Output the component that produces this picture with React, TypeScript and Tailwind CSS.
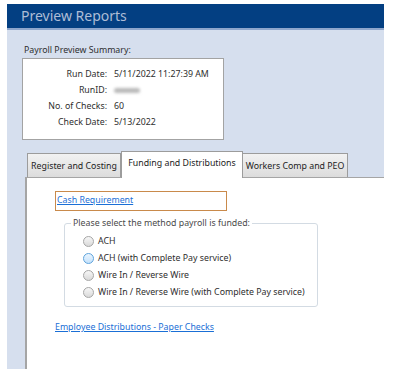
function Radio({ active }: { active?: boolean }) {
  return (
    <span
      className={
        active
          ? "inline-block h-[11px] w-[11px] shrink-0 rounded-full border border-[#5ea3dc] bg-gradient-to-b from-[#eaf5ff] to-[#c5e2fb]"
          : "inline-block h-[11px] w-[11px] shrink-0 rounded-full border border-[#a6a6a6] bg-gradient-to-b from-[#f7f7f7] to-[#d9d9d9]"
      }
    />
  );
}

const summary = [
  ["Run Date:", "5/11/2022 11:27:39 AM"],
  ["RunID:", ""],
  ["No. of Checks:", "60"],
  ["Check Date:", "5/13/2022"],
];

const methods = [
  "ACH",
  "ACH (with Complete Pay service)",
  "Wire In / Reverse Wire",
  "Wire In / Reverse Wire (with Complete Pay service)",
];

export default function App() {
  return (
    <div className="flex h-[369px] w-[393px] flex-col overflow-hidden whitespace-nowrap bg-white pl-[7px] pr-[9px] pt-[4px] font-['Noto_Sans',sans-serif] text-[8.8px] text-[#2e2e2e]">
      <div className="h-[26px] shrink-0 border-b-2 border-[#8ea6cc] bg-[#033f82] pl-[14px] text-[14px] leading-[24px] text-[#aebdd6]">
        Preview Reports
      </div>

      <div className="flex flex-1 flex-col bg-[#d6dfee] pl-[15px]">
        <div className="mt-[12px] pl-[2px] leading-[16px]">Payroll Preview Summary:</div>
        <div className="h-[82px] w-[202px] border border-[#a3a3a3] bg-white pt-[7px]">
          {summary.map(([label, value]) => (
            <div key={label} className="flex h-[16px] items-center leading-[16px]">
              <span className="w-[84px] text-right">{label}</span>
              <span className="ml-[7px]">
                {value || <span className="inline-block h-[5px] w-[26px] rounded-sm bg-[#b9b9b9] blur-[1.5px]" />}
              </span>
            </div>
          ))}
        </div>

        <div className="mt-[11px] flex h-[26px] items-end pl-[5px]">
          <div className="h-[24px] w-[94px] border border-b-0 border-[#9c9c9c] bg-gradient-to-b from-[#f2f2f2] to-[#dcdcdc] text-center leading-[24px] text-[#1c1c1c]">
            Register and Costing
          </div>
          <div className="relative z-10 -mb-px h-[27px] w-[122px] border border-b-0 border-[#9c9c9c] bg-white text-center leading-[22px] text-[#1c1c1c]">
            Funding and Distributions
          </div>
          <div className="h-[24px] w-[105px] border border-b-0 border-l-0 border-[#9c9c9c] bg-gradient-to-b from-[#f2f2f2] to-[#dcdcdc] text-center leading-[24px] text-[#1c1c1c]">
            Workers Comp and PEO
          </div>
        </div>

        <div className="ml-[3px] flex-1 border-l-2 border-t border-[#a5a5a5] bg-white pl-[28px] pt-[13px]">
          <div className="flex h-[20px] w-[172px] items-center border border-[#c98a4b] pl-px">
            <span className="text-[#1a6fd6] underline">Cash Requirement</span>
          </div>

          <div className="relative ml-[9px] mt-[12px] h-[84px] w-[254px] rounded-[3px] border border-[#d3dbe3] pl-[18px] pt-[9px]">
            <span className="absolute -top-[9px] left-[6px] bg-white px-[2px] leading-[16px] text-[#4a4a4a]">
              Please select the method payroll is funded:
            </span>
            {methods.map((m, i) => (
              <div key={m} className="flex h-[17px] items-center gap-[4px]">
                <Radio active={i === 1} />
                <span>{m}</span>
              </div>
            ))}
          </div>

          <div className="mt-[14px] text-[#1a6fd6] underline">Employee Distributions - Paper Checks</div>
        </div>
      </div>
    </div>
  );
}
